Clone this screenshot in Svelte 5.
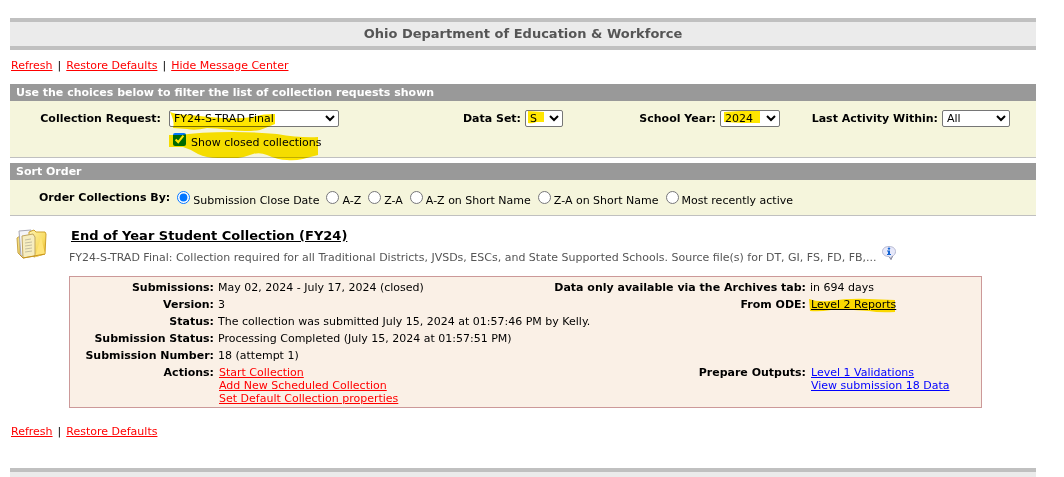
<script lang="ts">
  let request = $state('FY24-S-TRAD Final');
  let dataSet = $state('S');
  let year = $state('2024');
  let activity = $state('All');
  let showClosed = $state(true);
  let order = $state('Submission Close Date');

  const orders = [
    'Submission Close Date',
    'A-Z',
    'Z-A',
    'A-Z on Short Name',
    'Z-A on Short Name',
    'Most recently active'
  ];
</script>

<div class="page">
  <header class="banner"><h1>Ohio Department of Education &amp; Workforce</h1></header>

  <nav class="links top">
    <a href="#refresh">Refresh</a><span>|</span><a href="#defaults">Restore Defaults</a><span>|</span><a href="#messages">Hide Message Center</a>
  </nav>

  <section class="panel">
    <h2>Use the choices below to filter the list of collection requests shown</h2>
    <div class="filters">
      <div class="filter first">
        <label for="request">Collection Request:</label>
        <div class="marked">
          <select id="request" class="w-request" bind:value={request}>
            <option>FY24-S-TRAD Final</option>
          </select>
          <svg class="marker" width="160" height="52" viewBox="169 110 160 52">
            <path d="M170 112 Q177 115 190 115 Q207 117 222 118 Q240 119 252 117 Q262 114 275 114 V124 Q268 127 260 130 Q246 132 230 130 Q216 128 207 128 Q195 131 187 129 L173 128 Q175 122 170 112Z" />
            <path d="M169 135 L182 135 Q198 132 233 132 Q258 132 277 134 Q300 138 318 137 V155 Q310 157 303 159 Q294 161 287 160 Q278 160 267 155 Q260 152 253 154 Q245 157 238 158 L218 158 Q206 158 198 154 Q190 149 183 147 L169 147Z" />
          </svg>
        </div>
      </div>
      <div class="filter">
        <label for="dataset">Data Set:</label>
        <div class="marked">
          <select id="dataset" class="w-set" bind:value={dataSet}>
            <option>S</option>
          </select>
          <svg class="marker" width="38" height="17" viewBox="0 0 38 17">
            <path d="M3 1 L19 2 V12 L11 12 Q7 14 3 13Z" />
          </svg>
        </div>
      </div>
      <div class="filter">
        <label for="year">School Year:</label>
        <div class="marked">
          <select id="year" class="w-year" bind:value={year}>
            <option>2024</option>
          </select>
          <svg class="marker" width="60" height="17" viewBox="0 0 60 17">
            <path d="M4 2 L20 1 H40 V13 L22 13 L4 12Z" />
          </svg>
        </div>
      </div>
      <div class="filter">
        <label for="activity">Last Activity Within:</label>
        <select id="activity" class="w-activity" bind:value={activity}>
          <option>All</option>
        </select>
      </div>
      <label class="closed">
        <input type="checkbox" bind:checked={showClosed} />
        <span>Show closed collections</span>
      </label>
    </div>
  </section>

  <section class="panel">
    <h2>Sort Order</h2>
    <div class="sort" role="radiogroup" aria-labelledby="order-label">
      <b id="order-label">Order Collections By:</b>
      {#each orders as o}
        <label class="option">
          <input type="radio" name="order" value={o} bind:group={order} />
          <span>{o}</span>
        </label>
      {/each}
    </div>
  </section>

  <section class="collection">
    <svg class="folder" width="32" height="32" viewBox="0 0 32 32">
      <defs>
        <linearGradient id="gold" x1="0" y1="0" x2="1" y2="1">
          <stop offset="0" stop-color="#fff3b0" />
          <stop offset="0.6" stop-color="#f8dc62" />
          <stop offset="1" stop-color="#e0a91c" />
        </linearGradient>
      </defs>
      <path d="M2 9 L5 7 V26 L3 24Z" fill="#f3dc79" stroke="#c9a548" />
      <path d="M4 2 L16 1 V26 L6 27Z" fill="#f4f4f8" stroke="#a8a8b4" />
      <path d="M14 3 L19 1 L21 3 L30 3 L31 5 L30 25 L19 28 L14 24Z" fill="url(#gold)" stroke="#cda12b" />
      <path d="M7 7 L18 5 L20 8 V27 L8 29Z" fill="#f6edc0" stroke="#c0a560" />
      <path d="M10 11 L16 10 M10 14 L17 13 M10 17 L17 16 M10 20 L17 19 M10 23 L17 22" stroke="#c4bea0" />
      <path d="M26 8 L30 25 L20 28Z" fill="#ffe478" />
      <path d="M5 26 L8 29 L30 25" fill="none" stroke="#c99418" />
    </svg>
    <div class="body">
      <h3><a href="#collection">End of Year Student Collection (FY24)</a></h3>
      <p class="description">
        <span>FY24-S-TRAD Final: Collection required for all Traditional Districts, JVSDs, ESCs, and State Supported Schools. Source file(s) for DT, GI, FS, FD, FB,...</span>
        <svg class="info" width="14" height="14" viewBox="0 0 14 14">
          <path d="M7 .5 C11 .5 13.500 2.500 13.500 5.500 C13.500 8 12 9.500 10.500 10 L9 13.500 L7 10.500 C3 10.500 .5 8.500 .5 5.500 C.5 2.500 3 .5 7 .5Z" fill="#e6e8fa" stroke="#b4b6cf" />
          <path d="M10.500 10 L9 13.500 L7.500 11" fill="none" stroke="#8b8b9c" />
          <circle cx="7" cy="2.600" r="1.200" fill="#1464d2" />
          <path d="M5 4.500 H8 V8 H9 V9 H5 V8 H6 V5.500 H5Z" fill="#1464d2" />
        </svg>
      </p>

      <div class="details">
        <b>Submissions:</b>
        <span>May 02, 2024 - July 17, 2024 (closed)</span>
        <b>Data only available via the Archives tab:</b>
        <span>in 694 days</span>

        <b>Version:</b>
        <span>3</span>
        <b>From ODE:</b>
        <div class="list">
          <div class="marked">
            <a class="black" href="#level2">Level 2 Reports</a>
            <svg class="marker report" width="88" height="16" viewBox="0 0 88 16">
              <path d="M0 2 Q8 5 20 4 Q40 1 60 2 L86 3 V15 Q70 16 60 14 Q35 12 22 13 Q10 15 1 14Z" />
            </svg>
          </div>
        </div>

        <b>Status:</b>
        <span class="wide">The collection was submitted July 15, 2024 at 01:57:46 PM by Kelly.</span>
        <b>Submission Status:</b>
        <span class="wide">Processing Completed (July 15, 2024 at 01:57:51 PM)</span>
        <b>Submission Number:</b>
        <span class="wide">18 (attempt 1)</span>

        <b>Actions:</b>
        <div class="list">
          <a href="#start">Start Collection</a>
          <a href="#schedule">Add New Scheduled Collection</a>
          <a href="#properties">Set Default Collection properties</a>
        </div>
        <b>Prepare Outputs:</b>
        <div class="list">
          <a class="blue" href="#level1">Level 1 Validations</a>
          <a class="blue" href="#data">View submission 18 Data</a>
        </div>
      </div>
    </div>
  </section>

  <nav class="links bottom">
    <a href="#refresh">Refresh</a><span>|</span><a href="#defaults">Restore Defaults</a>
  </nav>

  <footer></footer>
</div>

<style>
  :global(body) {
    background: #fff;
    overflow: hidden;
  }
  .page {
    padding: 18px 28px 0 10px;
    font: 11px/13px Verdana, 'DejaVu Sans', sans-serif;
    color: #000;
  }
  h1, h2, h3, p {
    margin: 0;
  }
  a {
    color: #f00;
  }
  .banner {
    border-top: 4px solid #c0c0c0;
    border-bottom: 4px solid #c0c0c0;
    background: #ebebeb;
    text-align: center;
  }
  h1 {
    font-size: 13px;
    line-height: 24px;
    color: #555;
  }
  .links {
    display: flex;
    gap: 5px;
    padding: 0 1px;
  }
  .top {
    margin: 9px 0 12px;
  }
  .panel {
    margin-bottom: 5px;
    border-bottom: 1px solid #c0c0c0;
    background: #f5f5dc;
  }
  h2 {
    padding-left: 6px;
    background: #999;
    color: #fff;
    font-size: 11px;
    line-height: 17px;
  }
  .filters {
    display: grid;
    grid-template-columns: 329fr 224fr 217fr 230fr;
    row-gap: 6px;
    padding: 9px 26px 8px 0;
  }
  .filter {
    display: flex;
    justify-content: flex-end;
    align-items: center;
    gap: 4px;
    font-weight: bold;
    white-space: nowrap;
  }
  .first {
    gap: 8px;
  }
  select {
    display: block;
    box-sizing: border-box;
    height: 17px;
    margin: 0;
    padding: 0;
    border: 1px solid #767676;
    border-radius: 2px;
    background-color: #fff;
    color: #000;
    font: 11px Verdana, 'DejaVu Sans', sans-serif;
  }
  .w-request {
    width: 170px;
  }
  .w-set {
    width: 38px;
  }
  .w-year {
    width: 60px;
  }
  .w-activity {
    width: 68px;
  }
  .marked {
    position: relative;
    width: max-content;
  }
  .marker {
    position: absolute;
    top: 0;
    left: 0;
    fill: #ffe600;
    mix-blend-mode: multiply;
    pointer-events: none;
  }
  .report {
    top: -1px;
    left: -2px;
  }
  .closed {
    display: flex;
    justify-self: end;
    width: 166px;
    gap: 5px;
    white-space: nowrap;
  }
  .closed input, .option input {
    width: 13px;
    height: 13px;
    margin: 0;
    flex: none;
  }
  .closed span, .option span {
    padding-top: 3px;
  }
  .sort {
    display: flex;
    gap: 7px;
    padding: 11px 0 8px 29px;
    white-space: nowrap;
  }
  .option {
    display: flex;
    gap: 3px;
  }
  .collection {
    display: flex;
    gap: 22px;
    padding: 7px 54px 0 5px;
  }
  .folder {
    flex: none;
    margin-top: 1px;
  }
  .body {
    flex: 1;
    min-width: 0;
  }
  h3 {
    padding-left: 2px;
    font-size: 13px;
    line-height: 16px;
  }
  h3 a, .black {
    color: #000;
  }
  .description {
    display: flex;
    gap: 5px;
    margin-bottom: 7px;
    padding-top: 2px;
    color: #555;
    line-height: 23px;
    white-space: nowrap;
  }
  .info {
    flex: none;
  }
  .details {
    display: grid;
    grid-template-columns: 144px 1fr auto 171px;
    column-gap: 4px;
    padding-top: 2px;
    border: 1px solid #cc9999;
    background: #faf0e6;
    white-space: nowrap;
  }
  .details > * {
    padding: 2px 0;
  }
  .details > b {
    text-align: right;
  }
  .wide {
    grid-column: 2 / -1;
  }
  .details > .list {
    display: flex;
    flex-direction: column;
    align-items: flex-start;
    padding-left: 1px;
  }
  .blue {
    color: #00f;
  }
  .bottom {
    margin: 17px 0 30px;
  }
  footer {
    height: 24px;
    border-top: 4px solid #c0c0c0;
    background: #ebebeb;
  }
</style>
